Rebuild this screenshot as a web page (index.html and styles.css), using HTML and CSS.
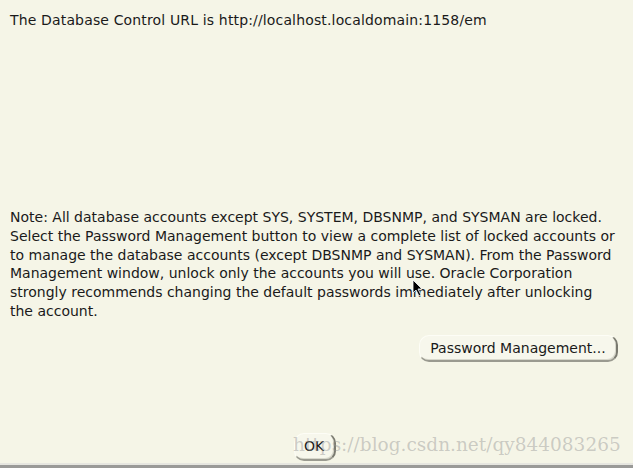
FILE: index.html
```html
<!DOCTYPE html>
<html>
<head>
<meta charset="utf-8">
<link rel="stylesheet" href="styles.css">
</head>
<body>
<div class="dialog">
  <p class="url">The Database Control URL is http://localhost.localdomain:1158/em</p>
  <p class="note">Note: All database accounts except SYS, SYSTEM, DBSNMP, and SYSMAN are locked.<br>Select the Password Management button to view a complete list of locked accounts or<br>to manage the database accounts (except DBSNMP and SYSMAN). From the Password<br>Management window, unlock only the accounts you will use. Oracle Corporation<br>strongly recommends changing the default passwords immediately after unlocking<br>the account.</p>
  <div class="pw-row"><button class="btn pw">Password Management...</button></div>
  <div class="ok-row"><button class="btn ok">OK</button></div>
  <div class="watermark">https://blog.csdn.net/qy844083265</div>
  <svg class="cursor" width="12" height="18" viewBox="0 0 12 18"><path d="M1 1 L1 14 L4 11 L7 17 L9 16 L6 10 L10 10 Z" fill="#000" stroke="#fff" stroke-width="0.8"/></svg>
</div>
<div class="taskbar"></div>
</body>
</html>
```

FILE: styles.css
```css
html, body {
  margin: 0;
  padding: 0;
  background: #f5f5e7;
}
.dialog {
  position: relative;
  height: 463px;
  box-sizing: border-box;
  padding: 11px 10px 0 10px;
  display: flex;
  flex-direction: column;
  font-family: "DejaVu Sans", sans-serif;
  font-size: 14px;
  color: #1a1a1a;
}
.url {
  margin: 0;
  line-height: 18px;
  letter-spacing: 0.15px;
}
.note {
  margin: 179px 0 0 0;
  line-height: 18.8px;
}
.pw-row {
  display: flex;
  justify-content: flex-end;
  margin-top: 14px;
  padding-right: 5px;
}
.btn {
  font-family: "DejaVu Sans", sans-serif;
  font-size: 14px;
  color: #1a1a1a;
  background: #f7f7ec;
  border: 1px solid #fdfdf6;
  border-right: 2px solid #7a7a70;
  border-bottom: 2px solid #9a9a90;
  border-radius: 10px;
  padding: 0;
  box-shadow: inset -1px -1px 0 #d8d8cc;
}
.pw {
  width: 199px;
  height: 27px;
}
.ok-row {
  display: flex;
  justify-content: center;
  margin-top: 71px;
}
.ok {
  width: 42px;
  height: 28px;
  margin-right: 4px;
}
.watermark {
  position: absolute;
  left: 293px;
  top: 434px;
  font-family: "DejaVu Serif", "Liberation Serif", serif;
  font-size: 18.5px;
  color: rgba(150, 150, 150, 0.45);
  white-space: nowrap;
}
.cursor {
  position: absolute;
  left: 412px;
  top: 279px;
}
.taskbar {
  height: 5px;
  background: linear-gradient(#e6e6e0 0, #e6e6e0 2px, #9a9a98 2px);
}
```
